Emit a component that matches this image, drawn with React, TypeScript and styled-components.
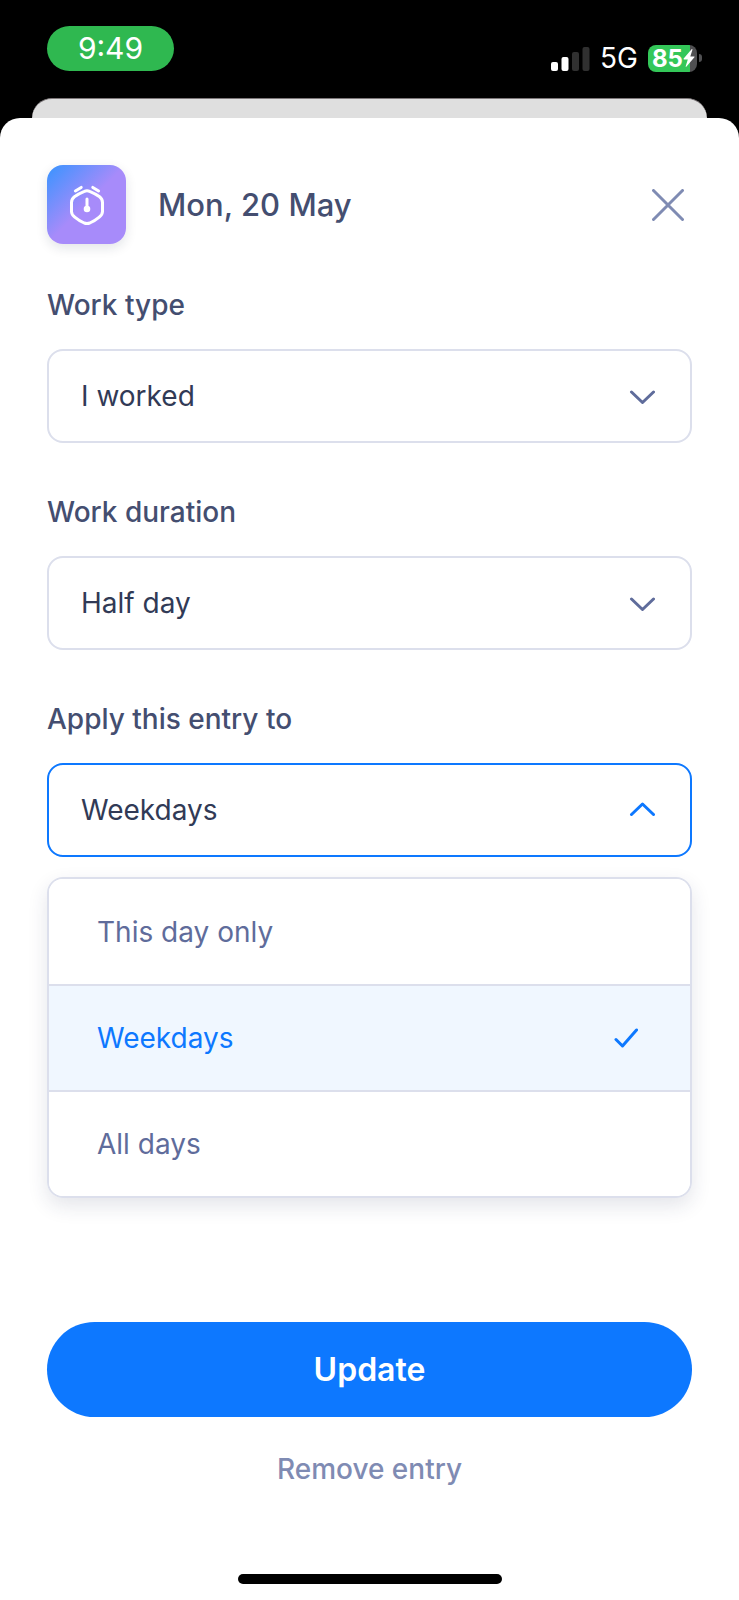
import { useState } from "react";
import type { MouseEvent, ReactNode } from "react";
import styled, { createGlobalStyle } from "styled-components";

const GlobalStyle = createGlobalStyle`
  *, *::before, *::after { box-sizing: border-box; }
  body {
    margin: 0;
    background: #000;
    font-family: Inter, "Liberation Sans", sans-serif;
    font-size: 28px;
    line-height: 36px;
  }
  button, select { font: inherit; letter-spacing: inherit; }
`;

const Screen = styled.div`
  display: flex;
  flex-direction: column;
  min-height: 100vh;
  background: #000;
`;

const StatusBar = styled.header`
  display: flex;
  justify-content: space-between;
  align-items: flex-start;
  height: 98px;
  padding: 26px 37px 0 47px;
  color: #fff;
`;

const TimePill = styled.time`
  width: 127px;
  height: 45px;
  border-radius: 23px;
  background: #2fb850;
  font-size: 30px;
  line-height: 45px;
  text-align: center;
`;

const StatusIcons = styled.div`
  display: flex;
  align-items: center;
  gap: 10px;
  padding-top: 14px;
`;

const Battery = styled.div`
  display: flex;
  align-items: center;
  gap: 2px;
`;

const BatteryBody = styled.div`
  display: flex;
  align-items: center;
  width: 49px;
  height: 27px;
  padding-left: 4px;
  border-radius: 8px;
  background: linear-gradient(to right, #34c759 42px, #505052 42px);
  font-size: 24px;
  font-weight: 700;
  line-height: 27px;
`;

const BatteryTip = styled.div`
  width: 3px;
  height: 8px;
  border-radius: 0 3px 3px 0;
  background: #505052;
`;

const SheetBehind = styled.div`
  height: 20px;
  margin: 0 32px;
  border-top: 1px solid #7d7779;
  border-radius: 20px 20px 0 0;
  background: #dfdfdf;
`;

const Sheet = styled.main`
  display: flex;
  flex: 1;
  flex-direction: column;
  padding: 47px 47px 16px;
  border-radius: 20px 20px 0 0;
  background: #fff;
`;

const SheetHeader = styled.div`
  display: flex;
  align-items: center;
  gap: 32px;
  margin-bottom: 43px;
`;

const EntryIcon = styled.div`
  display: grid;
  place-items: center;
  width: 79px;
  height: 79px;
  border-radius: 16px;
  background: linear-gradient(135deg, #3794ff 0%, #a78bfa 50%);
  box-shadow: 0 4px 12px rgba(20, 30, 60, 0.12);
`;

const Title = styled.h1`
  flex: 1;
  margin: 0;
  color: #444e70;
  font-size: 31px;
  font-weight: 500;
  line-height: 40px;
`;

const IconButton = styled.button`
  display: grid;
  place-items: center;
  width: 48px;
  height: 48px;
  padding: 0;
  border: 0;
  background: none;
  color: #7f8bb3;
  cursor: pointer;
`;

const Form = styled.form`
  display: flex;
  flex: 1;
  flex-direction: column;
`;

const Field = styled.div`
  display: flex;
  flex-direction: column;
  gap: 26px;
  margin-bottom: 51px;
`;

const Label = styled.label`
  color: #444e70;
  font-weight: 500;
`;

const SelectBox = styled.div<{ $open?: boolean }>`
  display: grid;
  align-items: center;
  color: ${(p) => (p.$open ? "#0d78ff" : "#5f6c9b")};

  > * { grid-area: 1 / 1; }
  > svg { justify-self: end; margin-right: 37px; pointer-events: none; }
`;

const Select = styled.select<{ $open?: boolean }>`
  appearance: none;
  width: 100%;
  height: 94px;
  padding: 0 80px 0 32px;
  border: 2px solid ${(p) => (p.$open ? "#0d78ff" : "#dcdfec")};
  border-radius: 16px;
  outline: none;
  background: #fff;
  color: #313a56;
  cursor: pointer;
`;

const Menu = styled.div`
  margin: -31px 0 48px;
  border: 2px solid #dcdfec;
  border-radius: 16px;
  overflow: hidden;
  box-shadow: 0 8px 20px rgba(30, 42, 80, 0.12);
`;

const MenuItem = styled.button<{ $selected: boolean }>`
  display: flex;
  align-items: center;
  justify-content: space-between;
  width: 100%;
  height: 105px;
  padding: 0 52px 0 48px;
  border: 0;
  background: ${(p) => (p.$selected ? "#f0f7ff" : "#fff")};
  color: ${(p) => (p.$selected ? "#0d78ff" : "#5f6c9b")};
  text-align: left;
  cursor: pointer;

  & + & {
    height: 106px;
    border-top: 2px solid #dcdfec;
  }
`;

const Actions = styled.div`
  display: flex;
  flex-direction: column;
  align-items: center;
  gap: 34px;
  margin-top: auto;
  padding-bottom: 87px;
`;

const PrimaryButton = styled.button`
  width: 100%;
  height: 95px;
  border: 0;
  border-radius: 48px;
  background: #0d78ff;
  color: #fff;
  font-size: 32px;
  font-weight: 600;
  cursor: pointer;
`;

const TextButton = styled.button`
  padding: 0;
  border: 0;
  background: none;
  color: #7f8bb3;
  font-weight: 500;
  cursor: pointer;
`;

const HomeIndicator = styled.div`
  align-self: center;
  width: 264px;
  height: 10px;
  border-radius: 5px;
  background: #000;
`;

const Signal = () => (
  <svg width="39" height="26" viewBox="0 0 39 26" fill="#fff" aria-hidden="true">
    <rect x="0" y="17" width="7" height="9" rx="2" />
    <rect x="10.5" y="12" width="7" height="14" rx="2" />
    <rect x="21" y="7" width="7" height="19" rx="2" fill="#303030" />
    <rect x="31.5" y="2" width="7" height="24" rx="2" fill="#303030" />
  </svg>
);

const Bolt = () => (
  <svg width="12" height="18" viewBox="0 0 12 18" fill="#fff" aria-hidden="true">
    <path d="M8.6 0.3 0.7 9.6q-.6.8.4.8h3.7L2.6 17.6q.4.5.9 0L11.4 8.3q.6-.8-.4-.8H7.3L9.5.4q-.4-.5-.9-.1Z" />
  </svg>
);

const Clock = () => (
  <svg width="38" height="42" viewBox="0 0 38 42" fill="none" stroke="#fff" strokeWidth="3" strokeLinecap="round" strokeLinejoin="round" aria-hidden="true">
    <path d="M16.4 7.4Q19 6.2 21.6 7.4Q27 9.6 31.6 12.8Q34.4 15 34.5 18.5V27.5Q34.4 30.6 31.6 32.8Q27 36.6 21.8 39Q19 40 16.2 39Q11 36.6 6.4 32.8Q3.6 30.6 3.5 27.5V18.5Q3.6 15 6.4 12.8Q11 9.6 16.4 7.4Z" />
    <path d="M7.4 7 13.2 3.4M24.8 3.4 30.6 7M19 15V25" />
    <circle cx="19" cy="25" r="1.8" fill="#fff" />
  </svg>
);

const Close = () => (
  <svg width="32" height="32" viewBox="0 0 32 32" fill="none" stroke="currentColor" strokeWidth="3" strokeLinecap="round" aria-hidden="true">
    <path d="M1.5 1.5 30.5 30.5M30.5 1.5 1.5 30.5" />
  </svg>
);

const Chevron = ({ up }: { up?: boolean }) => (
  <svg width="26" height="16" viewBox="0 0 26 16" fill="none" stroke="currentColor" strokeWidth="3" strokeLinecap="round" strokeLinejoin="round" aria-hidden="true">
    <path d={up ? "M2.5 12.5 13.5 2 24.5 12.5" : "M2.5 4 13.5 14.5 24.5 4"} />
  </svg>
);

const Check = () => (
  <svg width="24" height="20" viewBox="0 0 24 20" fill="none" stroke="currentColor" strokeWidth="3" strokeLinecap="round" strokeLinejoin="round" aria-hidden="true">
    <path d="M2 11.5 8.5 18 22.5 2" />
  </svg>
);

interface SelectFieldProps {
  id: string;
  label: string;
  value: string;
  options: string[];
  onChange: (value: string) => void;
  open?: boolean;
  onToggle?: () => void;
}

function SelectField({ id, label, value, options, onChange, open, onToggle }: SelectFieldProps) {
  const handleMouseDown = (e: MouseEvent) => {
    if (!onToggle) return;
    e.preventDefault();
    onToggle();
  };
  return (
    <Field>
      <Label htmlFor={id}>{label}</Label>
      <SelectBox $open={open}>
        <Select id={id} $open={open} value={value} onMouseDown={handleMouseDown} onChange={(e) => onChange(e.target.value)}>
          {options.map((o) => (
            <option key={o}>{o}</option>
          ))}
        </Select>
        <Chevron up={open} />
      </SelectBox>
    </Field>
  );
}

const APPLY_OPTIONS = ["This day only", "Weekdays", "All days"];

export default function App(): ReactNode {
  const [workType, setWorkType] = useState("I worked");
  const [duration, setDuration] = useState("Half day");
  const [applyTo, setApplyTo] = useState("Weekdays");
  const [open, setOpen] = useState(true);

  return (
    <Screen>
      <GlobalStyle />
      <StatusBar>
        <TimePill>9:49</TimePill>
        <StatusIcons>
          <Signal />
          <span>5G</span>
          <Battery>
            <BatteryBody>
              85
              <Bolt />
            </BatteryBody>
            <BatteryTip />
          </Battery>
        </StatusIcons>
      </StatusBar>
      <SheetBehind />
      <Sheet>
        <SheetHeader>
          <EntryIcon>
            <Clock />
          </EntryIcon>
          <Title>Mon, 20 May</Title>
          <IconButton type="button" aria-label="Close">
            <Close />
          </IconButton>
        </SheetHeader>
        <Form onSubmit={(e) => e.preventDefault()}>
          <SelectField id="work-type" label="Work type" value={workType} options={["I worked"]} onChange={setWorkType} />
          <SelectField id="duration" label="Work duration" value={duration} options={["Half day"]} onChange={setDuration} />
          <SelectField
            id="apply-to"
            label="Apply this entry to"
            value={applyTo}
            options={APPLY_OPTIONS}
            onChange={setApplyTo}
            open={open}
            onToggle={() => setOpen(!open)}
          />
          {open && (
            <Menu role="listbox" aria-label="Apply this entry to">
              {APPLY_OPTIONS.map((o) => (
                <MenuItem
                  key={o}
                  type="button"
                  role="option"
                  aria-selected={o === applyTo}
                  $selected={o === applyTo}
                  onClick={() => {
                    setApplyTo(o);
                    setOpen(false);
                  }}
                >
                  {o}
                  {o === applyTo && <Check />}
                </MenuItem>
              ))}
            </Menu>
          )}
          <Actions>
            <PrimaryButton type="submit">Update</PrimaryButton>
            <TextButton type="button">Remove entry</TextButton>
          </Actions>
        </Form>
        <HomeIndicator />
      </Sheet>
    </Screen>
  );
}
